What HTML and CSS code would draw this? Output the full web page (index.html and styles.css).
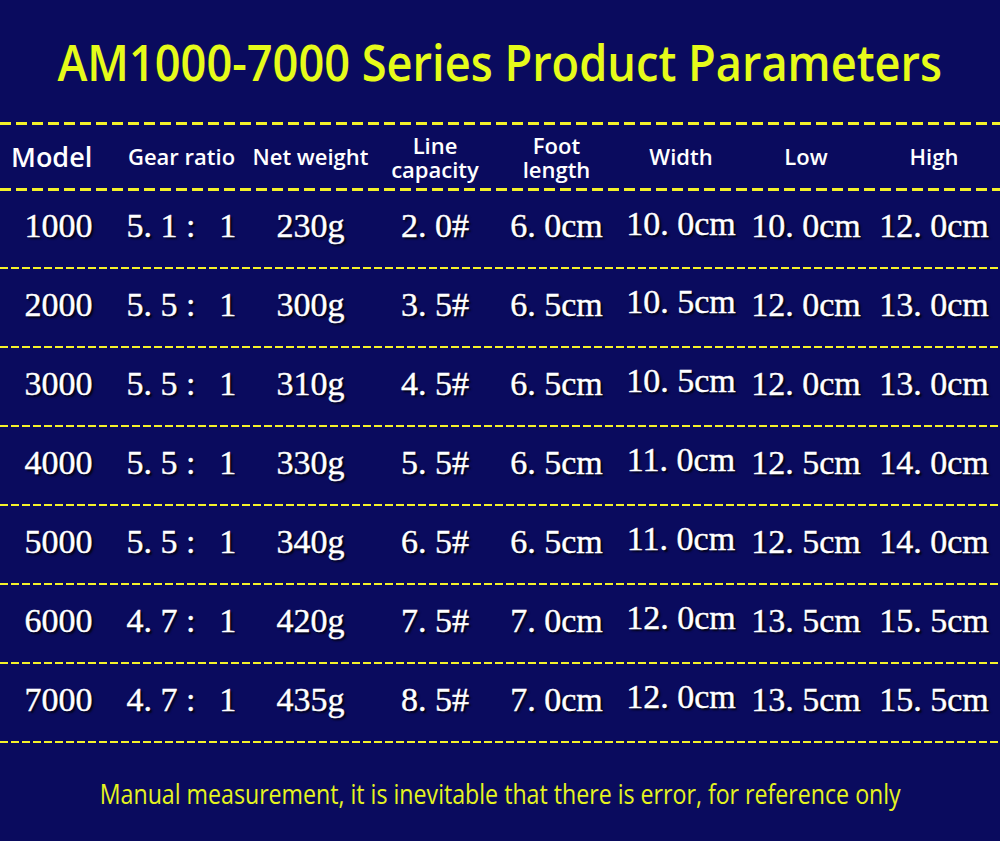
FILE: index.html
```html
<!DOCTYPE html>
<html lang="en">
<head>
<meta charset="utf-8">
<title>AM1000-7000 Series Product Parameters</title>
<link rel="stylesheet" href="styles.css">
</head>
<body>
<div class="page">
  <h1 class="title"><span class="title-text">AM1000-7000 Series Product Parameters</span></h1>
  <div class="table">
    <div class="rule thick"></div>
    <div class="row head">
      <div class="cell model">Model</div>
      <div class="cell">Gear ratio</div>
      <div class="cell">Net weight</div>
      <div class="cell two"><span class="l1">Line</span><span class="l2">capacity</span></div>
      <div class="cell two"><span class="l1">Foot</span><span class="l2">length</span></div>
      <div class="cell">Width</div>
      <div class="cell">Low</div>
      <div class="cell">High</div>
    </div>
    <div class="rule thick"></div>

    <div class="row data first">
      <div class="cell">1000</div><div class="cell">5. 1 :&nbsp;&nbsp;&thinsp;1</div><div class="cell">230g</div><div class="cell">2. 0#</div><div class="cell">6. 0cm</div><div class="cell raised">10. 0cm</div><div class="cell">10. 0cm</div><div class="cell">12. 0cm</div>
    </div>
    <div class="rule"></div>
    <div class="row data">
      <div class="cell">2000</div><div class="cell">5. 5 :&nbsp;&nbsp;&thinsp;1</div><div class="cell">300g</div><div class="cell">3. 5#</div><div class="cell">6. 5cm</div><div class="cell raised">10. 5cm</div><div class="cell">12. 0cm</div><div class="cell">13. 0cm</div>
    </div>
    <div class="rule"></div>
    <div class="row data">
      <div class="cell">3000</div><div class="cell">5. 5 :&nbsp;&nbsp;&thinsp;1</div><div class="cell">310g</div><div class="cell">4. 5#</div><div class="cell">6. 5cm</div><div class="cell raised">10. 5cm</div><div class="cell">12. 0cm</div><div class="cell">13. 0cm</div>
    </div>
    <div class="rule"></div>
    <div class="row data">
      <div class="cell">4000</div><div class="cell">5. 5 :&nbsp;&nbsp;&thinsp;1</div><div class="cell">330g</div><div class="cell">5. 5#</div><div class="cell">6. 5cm</div><div class="cell raised">11. 0cm</div><div class="cell">12. 5cm</div><div class="cell">14. 0cm</div>
    </div>
    <div class="rule"></div>
    <div class="row data">
      <div class="cell">5000</div><div class="cell">5. 5 :&nbsp;&nbsp;&thinsp;1</div><div class="cell">340g</div><div class="cell">6. 5#</div><div class="cell">6. 5cm</div><div class="cell raised">11. 0cm</div><div class="cell">12. 5cm</div><div class="cell">14. 0cm</div>
    </div>
    <div class="rule"></div>
    <div class="row data">
      <div class="cell">6000</div><div class="cell">4. 7 :&nbsp;&nbsp;&thinsp;1</div><div class="cell">420g</div><div class="cell">7. 5#</div><div class="cell">7. 0cm</div><div class="cell raised">12. 0cm</div><div class="cell">13. 5cm</div><div class="cell">15. 5cm</div>
    </div>
    <div class="rule"></div>
    <div class="row data">
      <div class="cell">7000</div><div class="cell">4. 7 :&nbsp;&nbsp;&thinsp;1</div><div class="cell">435g</div><div class="cell">8. 5#</div><div class="cell">7. 0cm</div><div class="cell raised">12. 0cm</div><div class="cell">13. 5cm</div><div class="cell">15. 5cm</div>
    </div>
    <div class="rule"></div>
  </div>
  <div class="note"><span class="note-text">Manual measurement, it is inevitable that there is error, for reference only</span></div>
</div>
</body>
</html>
```

FILE: styles.css
```css
html, body {
  margin: 0;
  padding: 0;
  background: #0a0b5e;
}

.page {
  width: 1000px;
  height: 841px;
  overflow: hidden;
  background: #0a0b5e;
  display: flex;
  flex-direction: column;
}

.title {
  height: 122px;
  margin: 0;
  display: flex;
  align-items: center;
  justify-content: center;
  font-family: "Open Sans", "Liberation Sans", sans-serif;
  font-weight: 600;
  font-size: 50px;
  color: #e6fb1a;
  padding-top: 2px;
  box-sizing: border-box;
}

.title-text {
  display: inline-block;
  white-space: nowrap;
  transform: scaleX(0.903);
}

.table {
  display: flex;
  flex-direction: column;
}

.rule {
  height: 2px;
  background: repeating-linear-gradient(90deg, #f4f22a 0 8px, transparent 8px 11px);
}

.rule.thick {
  height: 3px;
  background: repeating-linear-gradient(90deg, #f4f22a 0 11px, transparent 11px 16px);
}

.row {
  display: grid;
  grid-template-columns: 117px 129px 129px 120px 123px 126px 124px 132px;
  align-items: center;
}

.cell {
  text-align: center;
  white-space: nowrap;
}

.head {
  height: 63px;
  font-family: "Open Sans", "Liberation Sans", sans-serif;
  font-weight: 600;
  font-size: 22px;
  color: #ffffff;
}

.head .cell {
  line-height: 25px;
}

.head .two {
  display: flex;
  flex-direction: column;
  align-items: center;
}

.head .l1,
.head .l2 {
  display: block;
  height: 24px;
  line-height: 24px;
}

.head .model {
  font-size: 27px;
  text-align: left;
  padding-left: 11px;
}

.data {
  height: 77px;
  font-family: "Liberation Serif", serif;
  font-size: 34px;
  color: #ffffff;
  text-shadow: 2px 2px 2px rgba(0, 0, 0, 0.85);
  -webkit-text-stroke: 0.4px #ffffff;
  padding-bottom: 6px;
  box-sizing: border-box;
}

.data.first {
  height: 76px;
}

.data .raised {
  padding-bottom: 5px;
}

.note {
  flex: 1;
  display: flex;
  align-items: center;
  justify-content: center;
  padding-top: 2px;
}

.note-text {
  display: inline-block;
  font-family: "Open Sans", "Liberation Sans", sans-serif;
  font-weight: 500;
  font-size: 28px;
  color: #e6f41e;
  transform: scaleX(0.827);
  white-space: nowrap;
}
```
